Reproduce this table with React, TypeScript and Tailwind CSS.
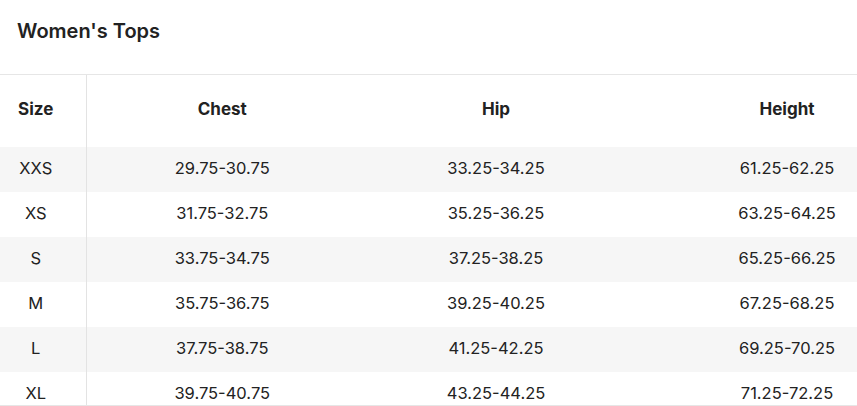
const rows = [
  ["XXS", "29.75-30.75", "33.25-34.25", "61.25-62.25"],
  ["XS", "31.75-32.75", "35.25-36.25", "63.25-64.25"],
  ["S", "33.75-34.75", "37.25-38.25", "65.25-66.25"],
  ["M", "35.75-36.75", "39.25-40.25", "67.25-68.25"],
  ["L", "37.75-38.75", "41.25-42.25", "69.25-70.25"],
  ["XL", "39.75-40.75", "43.25-44.25", "71.25-72.25"],
]

export default function App() {
  return (
    <div className="h-[406px] w-[857px] overflow-hidden bg-white text-[#222] font-['Inter','Liberation_Sans',sans-serif]">
      <h2 className="h-[74px] pl-[17px] pt-[16px] text-[20px] font-semibold">
        Women's Tops
      </h2>
      <div className="h-[332px] overflow-hidden border-y border-[#e6e6e6]">
        <table className="w-[940px] table-fixed border-collapse text-[16.5px]">
          <colgroup>
            <col className="w-[86px]" />
            <col className="w-[272px]" />
            <col className="w-[276px]" />
            <col className="w-[306px]" />
          </colgroup>
          <thead>
            <tr className="h-[72px] text-[17px] font-semibold">
              <th className="border-r border-[#e3e3e3] pl-[4px] pr-[18px] pb-[2px] text-center">Size</th>
              <th className="pb-[2px] text-center">Chest</th>
              <th className="pb-[2px] text-center">Hip</th>
              <th className="pb-[2px] text-center">Height</th>
            </tr>
          </thead>
          <tbody>
            {rows.map((r, i) => (
              <tr key={r[0]} className={i % 2 === 0 ? "h-[45px] bg-[#f6f6f6]" : "h-[45px] bg-white"}>
                <td className="border-r border-[#e3e3e3] pl-[4px] pr-[18px] pb-[2px] text-center">{r[0]}</td>
                <td className="pb-[2px] text-center">{r[1]}</td>
                <td className="pb-[2px] text-center">{r[2]}</td>
                <td className="pb-[2px] text-center">{r[3]}</td>
              </tr>
            ))}
          </tbody>
        </table>
      </div>
    </div>
  )
}
